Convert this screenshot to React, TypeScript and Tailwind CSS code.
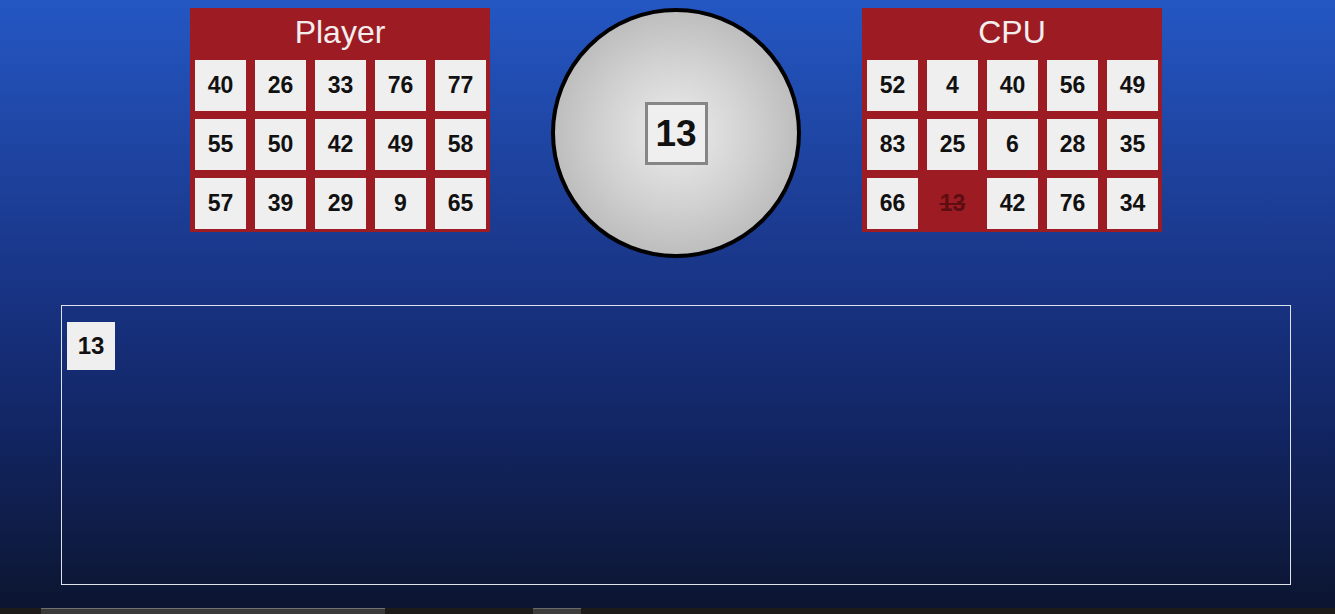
import React from "react";

const player = [40, 26, 33, 76, 77, 55, 50, 42, 49, 58, 57, 39, 29, 9, 65];
const cpu = [52, 4, 40, 56, 49, 83, 25, 6, 28, 35, 66, 13, 42, 76, 34];
const crossed = new Set([13]);

function Card({ title, nums, cross }: { title: string; nums: number[]; cross?: boolean }) {
  return (
    <div className="w-[300px] h-[224px] bg-[#9d1b22] flex flex-col shrink-0">
      <div className="h-[48px] flex items-center justify-center text-[32px] leading-none text-[#f3eeee]">
        {title}
      </div>
      <div className="grid grid-cols-[repeat(5,51px)] gap-x-[9px] gap-y-[8px] pt-[4px] pl-[5px]">
        {nums.map((n, i) => {
          const x = cross && crossed.has(n);
          return (
            <div
              key={i}
              className={
                x
                  ? "w-[51px] h-[51px] flex items-center justify-center text-[23px] font-bold text-[#5e0d12] line-through"
                  : "w-[51px] h-[51px] bg-[#efefef] flex items-center justify-center text-[23px] font-bold text-[#111]"
              }
            >
              {n}
            </div>
          );
        })}
      </div>
    </div>
  );
}

export default function App() {
  return (
    <div className="w-[1335px] h-[614px] overflow-hidden flex flex-col bg-[linear-gradient(to_bottom,#2457c3_0%,#1d409a_30%,#183383_48%,#122563_70%,#0c1632_98%)] font-['Liberation_Sans',Arial,sans-serif]">
      <div className="flex items-start pt-[8px] pl-[190px] h-[258px]">
        <Card title="Player" nums={player} />
        <div className="ml-[61px] w-[250px] h-[250px] shrink-0 rounded-full border-[4px] border-black bg-[radial-gradient(circle,#ededed_0%,#d0d0d0_45%,#a9a9a9_100%)] flex items-center justify-center">
          <div className="w-[63px] h-[63px] border-[3px] border-[#868686] bg-[#efefef] flex items-center justify-center text-[37px] font-bold text-[#111] leading-none">
            13
          </div>
        </div>
        <div className="ml-[61px]">
          <Card title="CPU" nums={cpu} cross />
        </div>
      </div>
      <div className="mt-[47px] ml-[61px] w-[1230px] h-[280px] border border-[#dfe3ea] pt-[16px] pl-[5px]">
        <div className="w-[48px] h-[48px] bg-[#efefef] flex items-center justify-center text-[24px] font-bold text-[#111]">
          13
        </div>
      </div>
      <div className="mt-[23px] h-[6px] bg-[#1c1b19] flex items-stretch">
        <div className="ml-[41px] w-[344px] bg-[#3a3a3a] border-t border-[#707070]" />
        <div className="ml-[148px] w-[48px] bg-[#3d3d3d] border-t border-[#6a6a6a]" />
      </div>
    </div>
  );
}
